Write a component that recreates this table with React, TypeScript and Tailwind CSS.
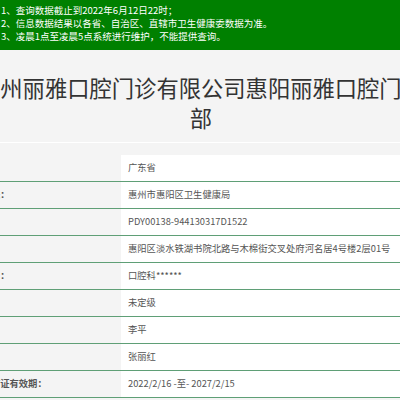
const notices = [
  '1、查询数据截止到2022年6月12日22时；',
  '2、信息数据结果以各省、自治区、直辖市卫生健康委数据为准。',
  '3、凌晨1点至凌晨5点系统进行维护，不能提供查询。',
];

const rows = [
  { label: '省份：', value: '广东省' },
  { label: '发证机关：', value: '惠州市惠阳区卫生健康局' },
  { label: '登记号：', value: 'PDY00138-944130317D1522' },
  { label: '地址：', value: '惠阳区淡水铁湖书院北路与木棉街交叉处府河名居4号楼2层01号' },
  { label: '诊疗科目：', value: '口腔科******' },
  { label: '级别：', value: '未定级' },
  { label: '法人：', value: '李平' },
  { label: '负责人：', value: '张丽红' },
  { label: '执业许可证有效期：', value: '2022/2/16 -至- 2027/2/15' },
];

export default function App() {
  return (
    <div className="w-[400px] h-[400px] overflow-hidden bg-[#f4f4f4] font-['Noto_Sans_CJK_SC',sans-serif]">
      {/* notice banner */}
      <div className="bg-[#008000] text-white text-[9.5px] leading-[13px] pt-[4px] pb-[7px] pl-[1px]">
        {notices.map((n) => (
          <p key={n} className="whitespace-nowrap">{n}</p>
        ))}
      </div>

      {/* title */}
      <div className="-ml-[24px] w-[450px] pt-[22px] pb-[10px] text-center text-[22.3px] leading-[30px] text-[#333] border-b border-white">
        惠州丽雅口腔门诊有限公司惠阳丽雅口腔门诊部
      </div>

      {/* detail table */}
      <div className="mt-[12px] -ml-[45px] w-[445px] text-[9.3px]">
        {rows.map((r) => (
          <div key={r.label} className="grid grid-cols-[166px_1fr] h-[27px] border-b border-[#5f9f76]">
            <div className="flex items-center pl-[8px] bg-[#f4f4f4] text-[#555] font-bold whitespace-nowrap">
              {r.label}
            </div>
            <div className="flex items-center pl-[7px] bg-white text-[#555] whitespace-nowrap">
              {r.value}
            </div>
          </div>
        ))}
      </div>
    </div>
  );
}
